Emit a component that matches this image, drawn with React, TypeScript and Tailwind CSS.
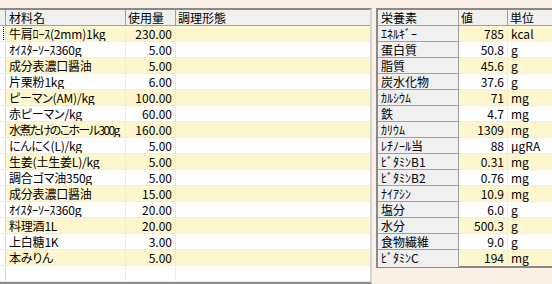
import React from 'react';

// [name, qty, tight] — tight squeezes a long name into the column like the reference
const ingredients: [string, string, boolean?][] = [
  ['牛肩ﾛｰｽ(2mm)1kg', '230.00'],
  ['ｵｲｽﾀｰｿｰｽ360g', '5.00'],
  ['成分表濃口醤油', '5.00'],
  ['片栗粉1kg', '6.00'],
  ['ピーマン(AM)/kg', '100.00'],
  ['赤ピーマン/kg', '60.00'],
  ['水煮たけのこホール300g', '160.00', true],
  ['にんにく(L)/kg', '5.00'],
  ['生姜(土生姜L)/kg', '5.00'],
  ['調合ゴマ油350g', '5.00'],
  ['成分表濃口醤油', '15.00'],
  ['ｵｲｽﾀｰｿｰｽ360g', '20.00'],
  ['料理酒1L', '20.00'],
  ['上白糖1K', '3.00'],
  ['本みりん', '5.00'],
  ['', ''],
];

const nutrients: [string, string, string][] = [
  ['ｴﾈﾙｷﾞｰ', '785', 'kcal'],
  ['蛋白質', '50.8', 'g'],
  ['脂質', '45.6', 'g'],
  ['炭水化物', '37.6', 'g'],
  ['ｶﾙｼｳﾑ', '71', 'mg'],
  ['鉄', '4.7', 'mg'],
  ['ｶﾘｳﾑ', '1309', 'mg'],
  ['ﾚﾁﾉｰﾙ当', '88', 'μgRA'],
  ['ﾋﾞﾀﾐﾝB1', '0.31', 'mg'],
  ['ﾋﾞﾀﾐﾝB2', '0.76', 'mg'],
  ['ﾅｲｱｼﾝ', '10.9', 'mg'],
  ['塩分', '6.0', 'g'],
  ['水分', '500.3', 'g'],
  ['食物繊維', '9.0', 'g'],
  ['ﾋﾞﾀﾐﾝC', '194', 'mg'],
];

const IngredientTable = () => (
  <div className="w-[372px] shrink-0 border-t-2 border-b-2 border-r-2 border-t-[#8a8a8a] border-b-[#8a8a8a] border-r-[#d4d4d4] bg-white">
    <div className="flex h-[16px] bg-[#f0f0f0] border-b border-[#a0a0a0] leading-[15px]">
      <div className="w-[6px] border-r border-[#a0a0a0]" />
      <div className="w-[120px] border-r border-[#a0a0a0] pl-[3px]">材料名</div>
      <div className="w-[50px] border-r border-[#a0a0a0] pl-[2px]">使用量</div>
      <div className="flex-1 pl-[2px]">調理形態</div>
    </div>
    {ingredients.map(([name, qty, tight], i) => (
      <div
        key={i}
        className={`flex h-[16px] border-b border-[#ececec] leading-[15px] ${
          i % 2 === 0 && name ? 'bg-[#fef7ce]' : 'bg-white'
        }`}
      >
        <div className="w-[6px] border-r border-[#d8d8d8] bg-white flex items-center">
          {i === 0 && <div className="w-[4px] h-[13px] border-r border-dotted border-black" />}
        </div>
        <div
          className={`w-[120px] border-r border-[#ececec] pl-[3px] whitespace-nowrap overflow-hidden [font-feature-settings:'palt'] ${
            tight ? 'tracking-[-1.6px]' : 'tracking-[-0.2px]'
          }`}
        >
          {name}
        </div>
        <div className="w-[50px] border-r border-[#ececec] pr-[3px] text-right">{qty}</div>
        <div className="flex-1" />
      </div>
    ))}
  </div>
);

const NutrientTable = () => (
  <div className="w-[200px] shrink-0 self-start border-2 border-r-0 border-[#8a8a8a] bg-white">
    <div className="flex h-[16px] bg-[#f0f0f0] border-b border-[#a0a0a0] leading-[15px]">
      <div className="w-[81px] border-r border-[#a0a0a0] pl-[3px]">栄養素</div>
      <div className="w-[49px] border-r border-[#a0a0a0] pl-[2px]">値</div>
      <div className="flex-1 pl-[2px]">単位</div>
    </div>
    {nutrients.map(([label, value, unit], i) => (
      <div
        key={label}
        className={`flex h-[16px] leading-[15px] ${i % 2 === 0 ? 'bg-[#fef7ce]' : 'bg-white'} ${
          i < nutrients.length - 1 ? 'border-b border-[#ececec]' : ''
        }`}
      >
        <div className={`w-[81px] -mb-px bg-[#f0f0f0] border-r border-[#a0a0a0] pl-[3px] whitespace-nowrap ${
          i < nutrients.length - 1 ? 'border-b border-b-[#a0a0a0]' : ''
        }`}>
          {label}
        </div>
        <div className="w-[49px] border-r border-[#ececec] pr-[3px] text-right">{value}</div>
        <div className="flex-1 pl-[3px]">{unit}</div>
      </div>
    ))}
  </div>
);

export default function App() {
  return (
    <div className="w-[552px] h-[284px] overflow-hidden bg-[#faf0e6] pt-[8px] flex gap-[4px] text-[12px] text-black font-['Noto_Sans_CJK_JP',sans-serif]">
      <IngredientTable />
      <NutrientTable />
    </div>
  );
}
